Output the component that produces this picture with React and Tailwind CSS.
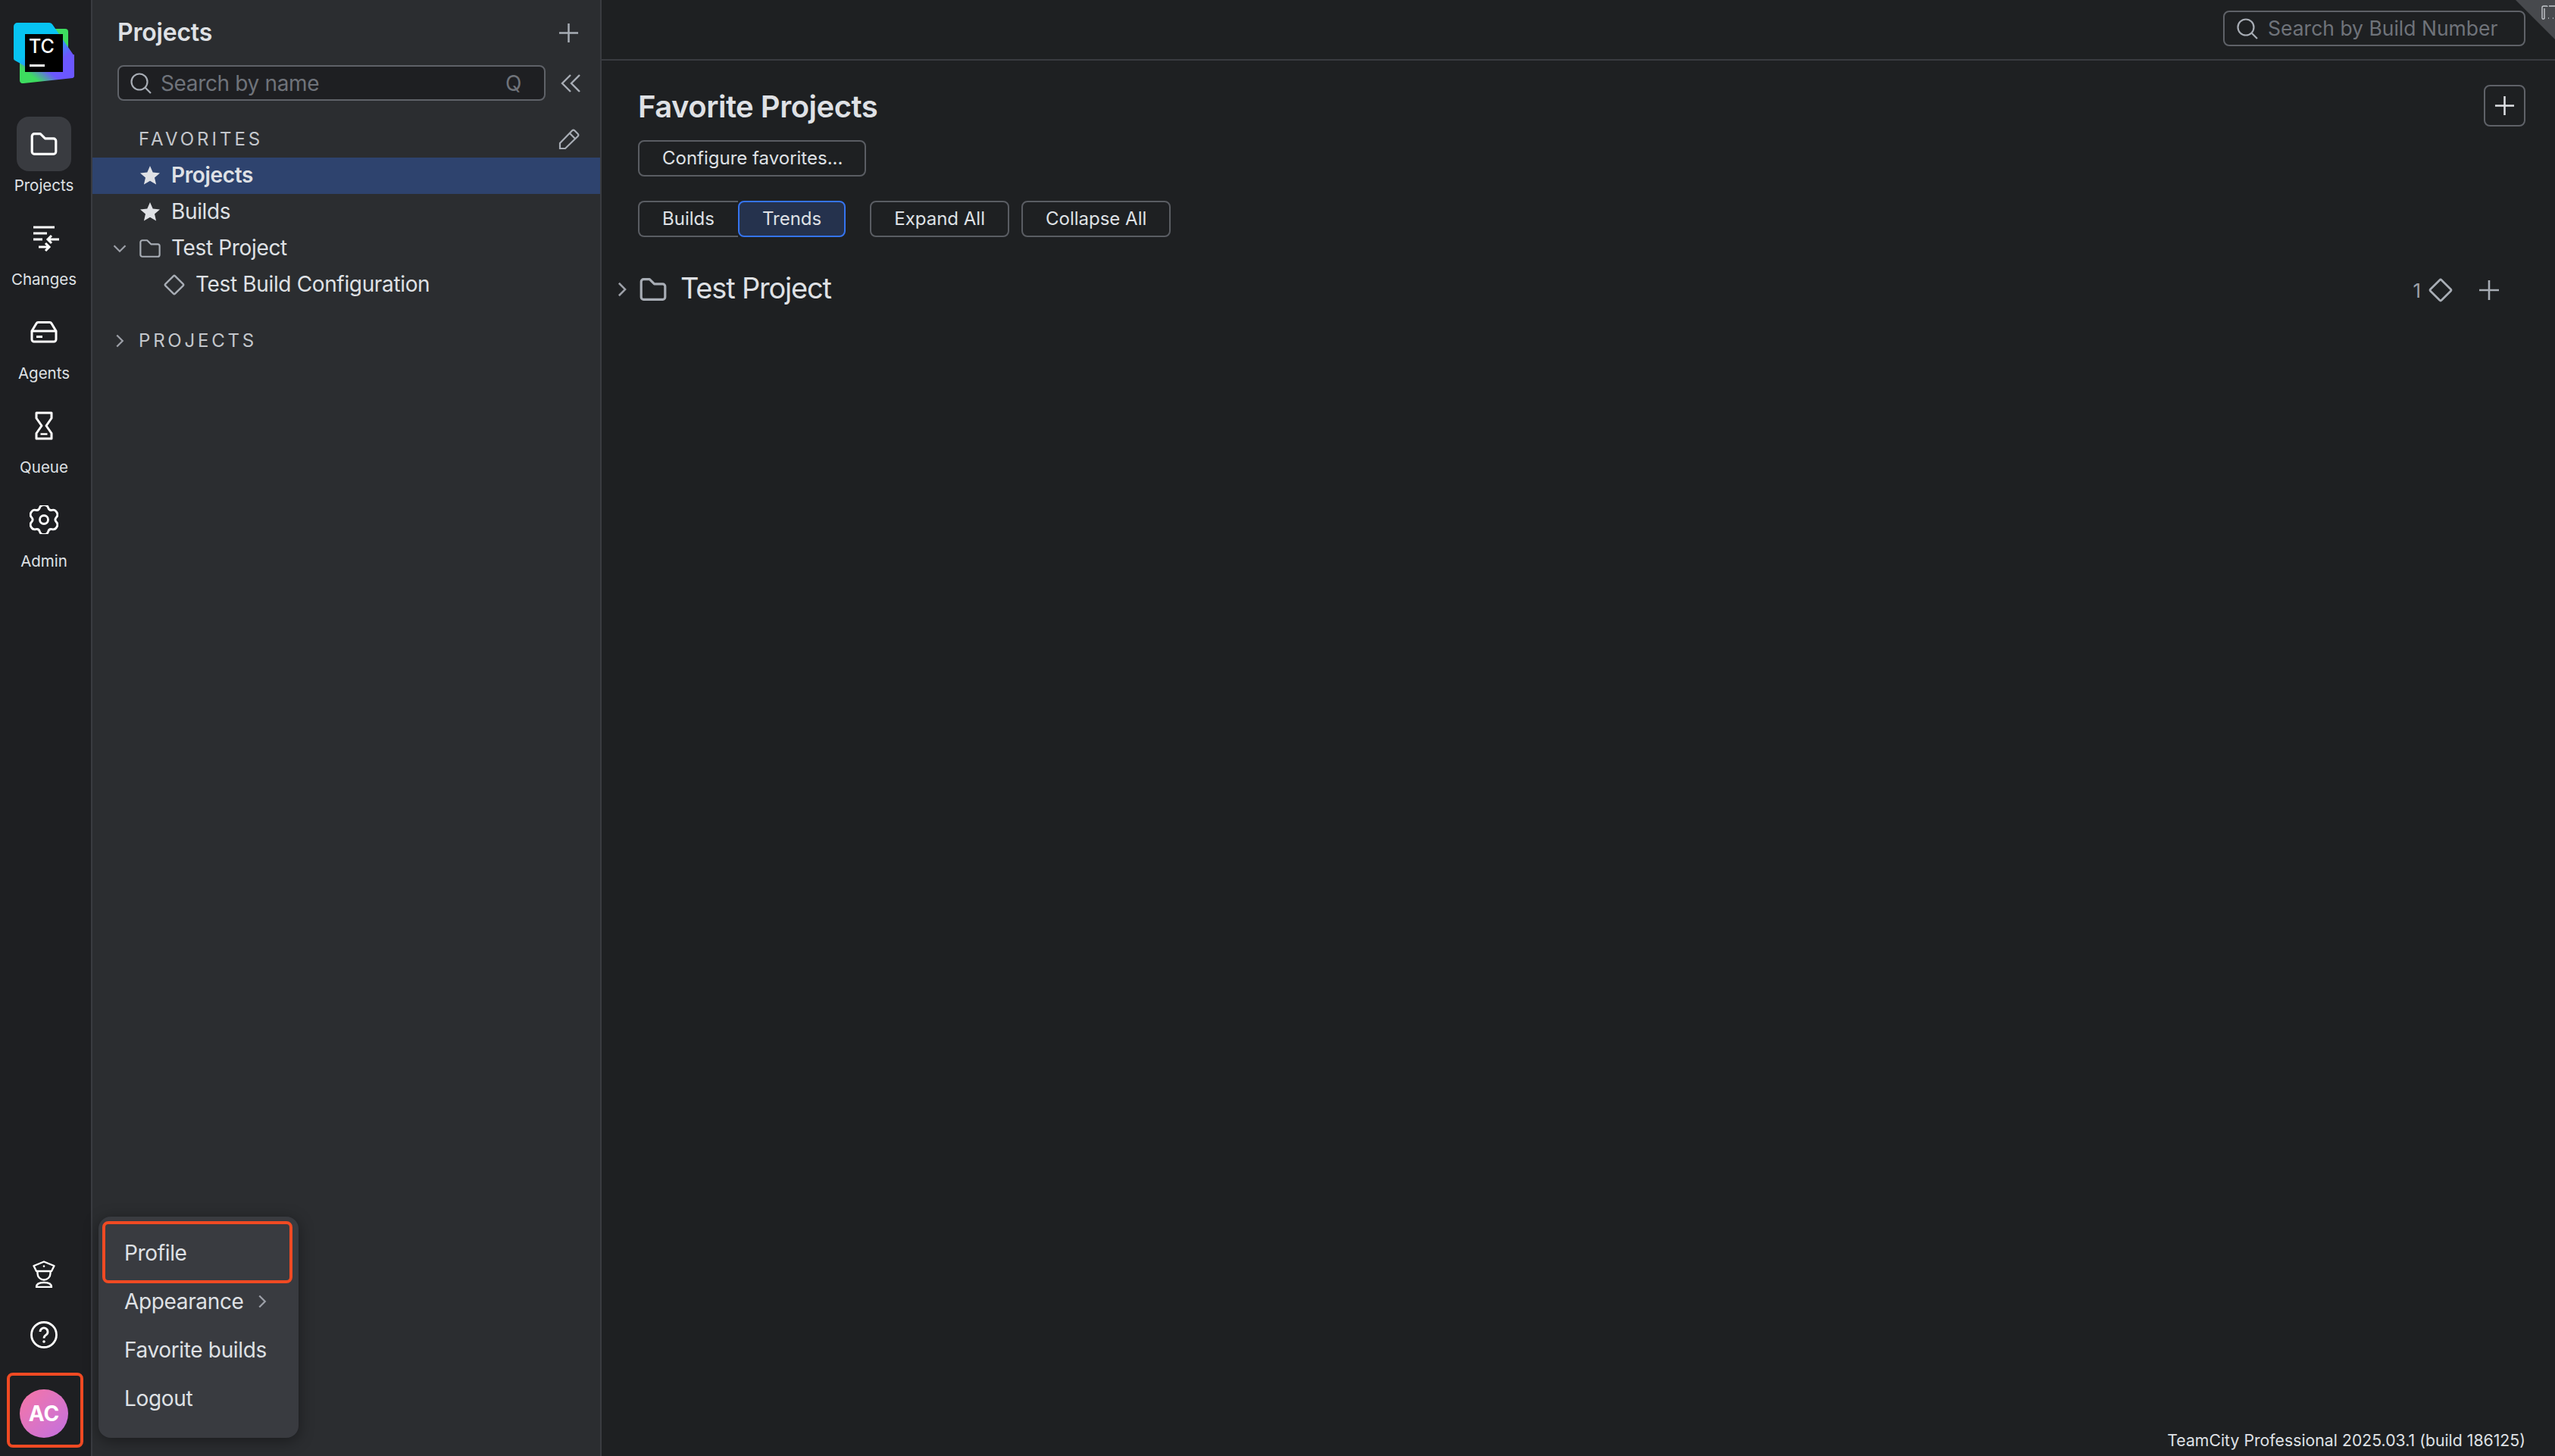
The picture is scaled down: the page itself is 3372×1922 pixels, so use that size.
function Star({ className }) {
  return (
    <svg viewBox="0 0 28 28" className={className}>
      <path d="M14 1l3.700 8.600 9.300.8-7 6.100 2.100 9.100L14 20.800l-8.100 4.800L8 16.500 1 10.400l9.300-.8z" fill="#dfe1e5" />
    </svg>
  );
}

function Magnifier() {
  return (
    <svg viewBox="0 0 28 28" fill="none" stroke="#a8adb5" strokeWidth="2.200" className="h-7 w-7 shrink-0">
      <circle cx="12" cy="12" r="10.500" />
      <path d="M19.500 19.500L27 27" />
    </svg>
  );
}

function Folder({ className, color = "#dfe1e5", width = 3 }) {
  return (
    <svg viewBox="1.500 1 33 28.500" fill="none" className={className}>
      <path d="M3 5.500A3 3 0 0 1 6 2.500h7.500l6 6H30a3 3 0 0 1 3 3V25a3 3 0 0 1-3 3H6a3 3 0 0 1-3-3z" stroke={color} strokeWidth={width} strokeLinejoin="round" />
    </svg>
  );
}

function Diamond({ className, color = "#a8adb5" }) {
  return (
    <svg viewBox="0 0 28 28" fill="none" className={className}>
      <rect x="5" y="5" width="18" height="18" rx="1.500" transform="rotate(45 14 14)" stroke={color} strokeWidth="2.400" />
    </svg>
  );
}

function Plus({ className, color = "#a8adb5" }) {
  return (
    <svg viewBox="0 0 28 28" fill="none" className={className}>
      <path d="M14 1v26M1 14h26" stroke={color} strokeWidth="2.600" />
    </svg>
  );
}

function Chevron({ className, down }) {
  return (
    <svg viewBox="0 0 16 16" fill="none" className={className}>
      <path d={down ? "M2 5l6 6 6-6" : "M5 2l6 6-6 6"} stroke="#9da0a8" strokeWidth="1.800" />
    </svg>
  );
}

function Logo() {
  return (
    <svg viewBox="0 0 80 80" className="h-20 w-20 shrink-0">
      <defs>
        <linearGradient id="tc-a" x1="0.1" y1="0.9" x2="0.7" y2="0.5">
          <stop offset="0.25" stopColor="#3ddc5f" />
          <stop offset="0.75" stopColor="#6b57ff" />
        </linearGradient>
        <linearGradient id="tc-b" x1="0" y1="0" x2="1" y2="1">
          <stop offset="0.45" stopColor="#07c3f2" />
          <stop offset="0.8" stopColor="#6b57ff" />
        </linearGradient>
      </defs>
      <path d="M54 8h14a4 4 0 0 1 4 4v28H54z" fill="#3ddc5f" />
      <path d="M8 50v26a4 4 0 0 0 5 4l65-7a3 3 0 0 0 2-3V42z" fill="url(#tc-a)" />
      <path d="M0 5a5 5 0 0 1 5-5h42a5 5 0 0 1 4 2l29 42v16L20 60 2 50a3 3 0 0 1-2-3z" fill="url(#tc-b)" />
      <rect x="15" y="15" width="50" height="50" fill="#000" />
      <text x="20" y="40" fill="#fff" fontFamily="Inter, sans-serif" fontSize="25" fontWeight="500">TC</text>
      <rect x="21" y="55" width="20" height="3" fill="#fff" />
    </svg>
  );
}

// six rounded lobes, smoothed through midpoints
function gearPath() {
  const pts = [];
  for (let i = 0; i < 6; i++) {
    const a = -90 + i * 60;
    [[a - 13, 20], [a + 13, 20], [a + 30, 13.5]].forEach(([deg, r]) => {
      const rad = (deg * Math.PI) / 180;
      pts.push([19 + r * Math.cos(rad), 19 + r * Math.sin(rad)]);
    });
  }
  const mid = (p, q) => [(p[0] + q[0]) / 2, (p[1] + q[1]) / 2];
  const start = mid(pts[pts.length - 1], pts[0]);
  let d = `M${start[0].toFixed(2)} ${start[1].toFixed(2)}`;
  pts.forEach((p, i) => {
    const m = mid(p, pts[(i + 1) % pts.length]);
    d += `Q${p[0].toFixed(2)} ${p[1].toFixed(2)} ${m[0].toFixed(2)} ${m[1].toFixed(2)}`;
  });
  return d + "Z";
}

const railItems = [
  {
    label: "Projects",
    active: true,
    icon: <Folder className="h-[30px] w-[36px]" color="#fff" />,
  },
  {
    label: "Changes",
    icon: (
      <svg viewBox="0 0 38 36" fill="none" stroke="#fff" strokeWidth="3" className="ml-[6px] h-9 w-[38px]">
        <path d="M2 4h28M2 12h18M2 20h12" />
        <path d="M36 20H21M26 15l-5 5 5 5" />
        <path d="M9 30h14M18 25l5 5-5 5" />
      </svg>
    ),
  },
  {
    label: "Agents",
    icon: (
      <svg viewBox="0 0 36 30" fill="none" stroke="#fff" strokeWidth="3" strokeLinejoin="round" className="h-[30px] w-[36px]">
        <path d="M2 14L8 4a3 3 0 0 1 2.500-1.500h15A3 3 0 0 1 28 4l6 10v11a3 3 0 0 1-3 3H5a3 3 0 0 1-3-3z" />
        <path d="M2 14h32" />
        <path d="M8 21.500h8" />
      </svg>
    ),
  },
  {
    label: "Queue",
    icon: (
      <svg viewBox="0 0 26 38" fill="none" stroke="#fff" strokeWidth="3" strokeLinejoin="round" className="h-[38px] w-[26px]">
        <path d="M3 2h20v7L16 19l7 10v7H3v-7l7-10L3 9z" />
        <path d="M8.500 30h9" strokeWidth="2.500" />
      </svg>
    ),
  },
  {
    label: "Admin",
    icon: (
      <svg viewBox="0 0 38 38" fill="none" stroke="#fff" strokeWidth="2.800" className="h-[38px] w-[38px]">
        <path d={gearPath()} />
        <circle cx="19" cy="19" r="5.500" />
      </svg>
    ),
  },
];

const treeRow = "flex h-12 items-center text-[28px] tracking-[-0.35px]";
const btn = "flex h-12 items-center rounded-lg border-2 border-[#5a5d63] px-[30px] text-[24px] text-[#dfe1e5]";

export default function App() {
  return (
    <div className="relative flex h-screen overflow-hidden bg-[#1e2022] font-['Inter',sans-serif] text-[#dfe1e5]">
      {/* rail */}
      <aside className="flex w-[122px] shrink-0 flex-col items-center border-r-2 border-[#393b40] bg-[#1e1f22] pr-1 pt-[30px]">
        <Logo />
        <nav className="mt-[44px] flex flex-col items-center gap-[17px]">
          {railItems.map((item) => (
            <div key={item.label} className="flex w-[100px] flex-col items-center">
              <div className={`flex h-[72px] w-[72px] items-center justify-center rounded-2xl ${item.active ? "bg-[#393b40]" : ""}`}>
                {item.icon}
              </div>
              <div className="mt-[3px] h-[32px] text-[20.500px] leading-[32px] text-[#dfe1e5]">{item.label}</div>
            </div>
          ))}
        </nav>
        <div className="mt-auto flex flex-col items-center pb-[11px]">
          <svg viewBox="0 0 30 36" fill="none" stroke="#fff" strokeWidth="2.400" strokeLinejoin="round" className="h-9 w-[30px]">
            <path d="M15 1.500L28.500 7 25 14H5L1.500 7z" />
            <path d="M6.500 14v3a8.500 8.500 0 0 0 17 0v-3" />
            <path d="M5 35c0-4 4-6 10-6s10 2 10 6z" />
            <circle cx="15" cy="7.500" r="1.300" fill="#fff" stroke="none" />
          </svg>
          <svg viewBox="0 0 36 36" fill="none" stroke="#fff" strokeWidth="2.800" className="mt-[44px] h-9 w-9">
            <circle cx="18" cy="18" r="16.500" />
            <path d="M13 14a5 5 0 1 1 8 4c-2 1.400-3 2-3 4.500" />
            <circle cx="18" cy="27" r="1.800" fill="#fff" stroke="none" />
          </svg>
          <div className="ml-[3px] mt-[32px] flex h-[99px] w-[101px] items-center justify-center rounded-lg border-[4px] border-[#f04a23] pr-[3px] pt-[9px]">
            <div className="flex h-16 w-16 items-center justify-center rounded-full bg-gradient-to-br from-[#f774a4] to-[#c26fe0] text-[28px] font-bold text-white">AC</div>
          </div>
        </div>
      </aside>

      {/* projects panel */}
      <section className="flex w-[672px] shrink-0 flex-col border-r-2 border-[#393b40] bg-[#2b2d30]">
        <div className="flex h-[86px] items-center justify-between pl-[33px] pr-[28px]">
          <h2 className="text-[32px] font-semibold tracking-[-0.2px] text-[#dfe1e5]">Projects</h2>
          <Plus className="h-[27px] w-[27px]" />
        </div>
        <div className="flex items-center gap-[20px] pl-[33px] pr-[26px]">
          <div className="flex h-[47px] flex-1 items-center rounded-lg border-2 border-[#5f6268] bg-[#1e1f22] pl-[15px] pr-[30px] text-[28px] tracking-[-0.35px] text-[#6f737a]">
            <Magnifier />
            <span className="ml-[12px]">Search by name</span>
            <span className="ml-auto">Q</span>
          </div>
          <svg viewBox="0 0 26 24" fill="none" stroke="#a8adb5" strokeWidth="2.400" className="h-6 w-[26px]">
            <path d="M13 1L2 12l11 11M25 1L14 12l11 11" />
          </svg>
        </div>
        <div className="mt-[27px] flex h-[48px] items-center justify-between pl-[61px] pr-[27px]">
          <span className="text-[24px] tracking-[4px] text-[#c4c7cc]">FAVORITES</span>
          <svg viewBox="0 0 28 28" fill="none" stroke="#a8adb5" strokeWidth="2.200" className="h-7 w-7">
            <path d="M2 26v-7L18 2.500a2.500 2.500 0 0 1 3.500 0l4 4a2.500 2.500 0 0 1 0 3.500L9 26z" />
            <path d="M15 6l7.500 7.500" />
          </svg>
        </div>
        <div className="flex h-12 items-center bg-[#2e436e] pl-[62px] text-[28px] font-semibold tracking-[-0.35px]">
          <Star className="h-7 w-7" />
          <span className="ml-[14px] pb-[3px]">Projects</span>
        </div>
        <div className={`${treeRow} pl-[62px]`}>
          <Star className="h-7 w-7" />
          <span className="ml-[14px] pb-[3px]">Builds</span>
        </div>
        <div className={`${treeRow} pl-[26px]`}>
          <Chevron down className="h-5 w-5" />
          <Folder className="ml-[16px] h-[24px] w-[28px]" color="#a8adb5" width={2.6} />
          <span className="ml-[14px] pb-[3px]">Test Project</span>
        </div>
        <div className={`${treeRow} pl-[94px]`}>
          <Diamond className="h-7 w-7" />
          <span className="ml-[14px] pb-[3px]">Test Build Configuration</span>
        </div>
        <div className="mt-[26px] flex h-[48px] items-center pl-[26px]">
          <Chevron className="h-5 w-5" />
          <span className="ml-[15px] text-[24px] tracking-[3.800px] text-[#c4c7cc]">PROJECTS</span>
        </div>
      </section>

      {/* main */}
      <main className="flex min-w-0 flex-1 flex-col">
        <header className="flex h-[80px] shrink-0 items-start justify-end border-b-2 border-[#393b40] pr-[39px] pt-[14px]">
          <div className="flex h-[47px] w-[399px] items-center rounded-lg border-2 border-[#5f6268] pl-[16px] text-[26.500px] text-[#6f737a]">
            <Magnifier />
            <span className="ml-[13px]">Search by Build Number</span>
          </div>
        </header>
        <div className="flex flex-1 flex-col pl-[48px] pr-[39px] pt-[32px]">
          <div className="flex items-start justify-between">
            <h1 className="mt-[5px] text-[40px] font-semibold leading-[48px] tracking-[-0.5px]">Favorite Projects</h1>
            <div className="flex h-[55px] w-[55px] items-center justify-center rounded-lg border-2 border-[#5f6268]">
              <Plus className="h-[27px] w-[27px]" color="#dfe1e5" />
            </div>
          </div>
          <div className="mt-[18px] flex">
            <div className={`${btn} pr-[29px]`}>Configure favorites...</div>
          </div>
          <div className="mt-[32px] flex">
            <div className={`${btn} rounded-r-none border-r-0 pr-[31px]`}>Builds</div>
            <div className={`${btn} border-[#3574f0] bg-[#25324d]`}>Trends</div>
            <div className={`${btn} ml-[32px]`}>Expand All</div>
            <div className={`${btn} ml-[16px]`}>Collapse All</div>
          </div>
          <div className="-ml-[32px] mt-[45px] flex h-[48px] items-center">
            <Chevron className="h-[22px] w-[22px]" />
            <Folder className="ml-[12px] h-[30px] w-[36px]" color="#a8adb5" />
            <span className="ml-[18px] pb-[3px] text-[38px] font-normal tracking-[-1.2px]">Test Project</span>
            <div className="ml-auto mr-[34px] flex items-center pt-[2px] text-[26px] text-[#9da0a8]">
              1
              <Diamond className="ml-[10px] h-[32px] w-[32px]" />
              <Plus className="ml-[34px] h-[28px] w-[28px]" />
            </div>
          </div>
          <div className="mt-auto self-end pb-[4px] text-[21.250px] text-[#dfe1e5]">TeamCity Professional 2025.03.1 (build 186125)</div>
        </div>
      </main>

      {/* user menu */}
      <div className="absolute left-[130px] top-[1606px] flex h-[292px] w-[264px] flex-col rounded-2xl bg-[#393b40] pt-[16px] text-[28px] tracking-[-0.35px] shadow-[0_4px_20px_rgba(0,0,0,0.4)]">
        <div className="absolute left-[5px] top-[6px] h-[82px] w-[251px] rounded-lg border-[4px] border-[#f04a23]" />
        {["Profile", "Appearance", "Favorite builds", "Logout"].map((label) => (
          <div key={label} className="flex h-[64px] items-center pl-[34px]">
            {label}
            {label === "Appearance" && <Chevron className="ml-[14px] h-5 w-5" />}
          </div>
        ))}
      </div>

      {/* corner ribbon */}
      <div className="absolute right-0 top-0 h-[52px] w-[52px] bg-[#47494d] [clip-path:polygon(0_0,100%_0,100%_100%)]">
        <svg viewBox="0 0 20 20" fill="none" stroke="#c4c7cc" strokeWidth="1.400" className="absolute right-0 top-[6px] h-5 w-5">
          <path d="M3 18V4a2 2 0 0 1 2-2h4a1 1 0 0 1 1 1M6 5v12a1.500 1.500 0 0 1-3 1" />
          <path d="M12 2h8M11 18h1M17 18h1" />
        </svg>
      </div>
    </div>
  );
}
